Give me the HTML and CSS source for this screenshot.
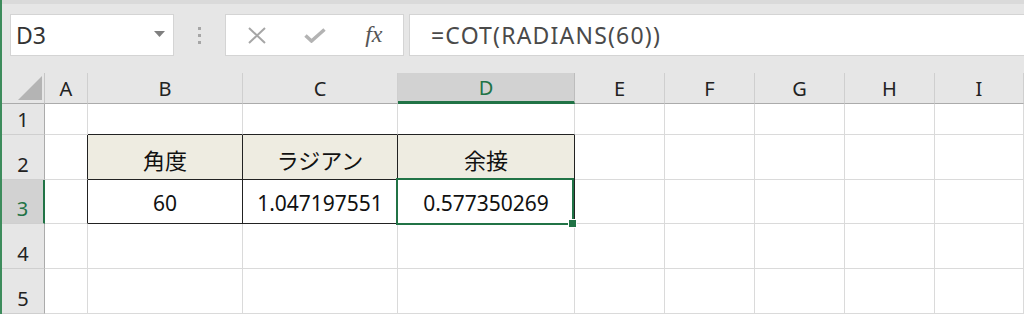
FILE: index.html
```html
<!DOCTYPE html>
<html lang="ja">
<head>
  <meta charset="UTF-8" />
  <meta name="viewport" content="width=device-width, initial-scale=1.0"/>
  <title>COT - Excel</title>
  <link rel="stylesheet" href="styles.css">
</head>
<body>
  <div class="app">
    <!-- Formula bar -->
    <div class="toolbar">
      <div class="namebox">
        <span>D3</span>
        <svg class="caret" width="11" height="6" viewBox="0 0 11 6"><polygon points="0,0 11,0 5.5,6" /></svg>
      </div>
      <div class="grip"><i></i><i></i><i></i></div>
      <div class="fxbtns">
        <svg width="18" height="17" viewBox="0 0 18 17"><path d="M1 1 L17 16 M17 1 L1 16" /></svg>
        <svg class="check" width="22" height="15" viewBox="0 0 22 15"><path d="M1.5 7.5 L7.5 13 L20.5 1.5" /></svg>
        <span class="fx">fx</span>
      </div>
      <div class="formula">=COT(RADIANS(60))</div>
    </div>

    <!-- Sheet -->
    <div class="sheet">
      <div class="corner"><svg width="24" height="24" viewBox="0 0 24 24"><polygon points="24,0 24,24 0,24" /></svg></div>
      <div class="colhead">A</div>
      <div class="colhead">B</div>
      <div class="colhead">C</div>
      <div class="colhead active">D</div>
      <div class="colhead">E</div>
      <div class="colhead">F</div>
      <div class="colhead">G</div>
      <div class="colhead">H</div>
      <div class="colhead">I</div>

      <div class="rowhead">1</div>
      <div class="cell"></div>
      <div class="cell edge-b"></div>
      <div class="cell edge-b"></div>
      <div class="cell edge-b"></div>
      <div class="cell"></div>
      <div class="cell"></div>
      <div class="cell"></div>
      <div class="cell"></div>
      <div class="cell"></div>

      <div class="rowhead">2</div>
      <div class="cell edge-r"></div>
      <div class="cell tbl head"><span>角度</span></div>
      <div class="cell tbl head"><span>ラジアン</span></div>
      <div class="cell tbl head"><span>余接</span></div>
      <div class="cell"></div>
      <div class="cell"></div>
      <div class="cell"></div>
      <div class="cell"></div>
      <div class="cell"></div>

      <div class="rowhead active">3</div>
      <div class="cell edge-r"></div>
      <div class="cell tbl">60</div>
      <div class="cell tbl">1.047197551</div>
      <div class="cell tbl selected">0.577350269</div>
      <div class="cell"></div>
      <div class="cell"></div>
      <div class="cell"></div>
      <div class="cell"></div>
      <div class="cell"></div>

      <div class="rowhead">4</div>
      <div class="cell"></div>
      <div class="cell"></div>
      <div class="cell"></div>
      <div class="cell"></div>
      <div class="cell"></div>
      <div class="cell"></div>
      <div class="cell"></div>
      <div class="cell"></div>
      <div class="cell"></div>

      <div class="rowhead">5</div>
      <div class="cell"></div>
      <div class="cell"></div>
      <div class="cell"></div>
      <div class="cell"></div>
      <div class="cell"></div>
      <div class="cell"></div>
      <div class="cell"></div>
      <div class="cell"></div>
      <div class="cell"></div>
    </div>
  </div>
</body>
</html>
```

FILE: styles.css
```css
html, body { margin: 0; padding: 0; background: #fff; overflow: hidden; }
body { font-family: "Noto Sans", "Noto Sans CJK JP", sans-serif; color: #222; }
.app { border-left: 2px solid #3d8c5c; width: 1022px; height: 314px; overflow: hidden; }

/* formula bar */
.toolbar { display: flex; align-items: stretch; height: 42px; padding: 10px 0 17px 8px; background: #e6e6e6; border-top: 4px solid #dadada; }
.namebox { width: 164px; background: #fff; border: 1px solid #d4d4d4; display: flex; align-items: center; justify-content: space-between; padding: 0 8px 0 5px; box-sizing: border-box; font-size: 23px; color: #333; }
.namebox span { line-height: 1; }
.caret { fill: #7f7f7f; margin-top: -3px; }
.grip { width: 51px; display: flex; flex-direction: column; align-items: center; justify-content: center; gap: 4px; }
.grip i { display: block; width: 3px; height: 3px; background: #a6a6a6; }
.fxbtns { width: 179px; background: #fff; border: 1px solid #d4d4d4; box-sizing: border-box; display: grid; grid-template-columns: repeat(3, 1fr); align-items: center; justify-items: center; padding-left: 2px; }
.fxbtns path { fill: none; stroke: #a6a6a6; stroke-width: 2; }
.fxbtns .check path { stroke: #b3b3b3; stroke-width: 3.5; }
.fx { font-family: "Liberation Serif", serif; font-style: italic; font-size: 24px; color: #555; margin-top: -2px; }
.formula { flex: 1; margin-left: 5px; background: #fff; border: 1px solid #d4d4d4; border-right: none; display: flex; align-items: center; padding-left: 21px; font-size: 23px; letter-spacing: 1.2px; color: #4a4a4a; }

/* sheet grid */
.sheet { display: grid; grid-template-columns: 43px 43px 155px 155px 177px 90px 90px 90px 90px 89px; grid-template-rows: 31px 31px 45px 44px 45px 45px; }
.corner { background: #e6e6e6; border-right: 1px solid #c6c6c6; border-bottom: 1px solid #ababab; display: flex; align-items: flex-end; justify-content: flex-end; padding: 0 2px 3px 0; }
.corner polygon { fill: #b4b4b4; }
.colhead { background: #e6e6e6; border-right: 1px solid #cfcfcf; border-bottom: 1px solid #ababab; display: flex; align-items: center; justify-content: center; font-size: 20px; line-height: 1; padding-top: 2px; }
.colhead.active { background: #d2d2d2; color: #217346; border-bottom: 3px solid #217346; border-right-color: #bdbdbd; }
.rowhead { background: #e6e6e6; border-right: 1px solid #ababab; border-bottom: 1px solid #cfcfcf; display: flex; align-items: flex-end; justify-content: center; font-size: 20px; line-height: 1; padding-bottom: 4px; }
.rowhead.active { background: #d2d2d2; color: #217346; border-right: 2px solid #217346; }

.cell { border-right: 1px solid #dadada; border-bottom: 1px solid #dadada; display: flex; align-items: flex-end; justify-content: center; font-size: 21px; line-height: 1; padding-bottom: 9px; color: #111; }
.cell.edge-b { border-bottom-color: #222; }
.cell.edge-r { border-right-color: #222; }
.cell.tbl { border-right-color: #222; border-bottom-color: #222; }
.cell.head { background: #eeece1; padding-bottom: 8px; }
.cell.head span { font-size: 22px; }
.cell.selected { position: relative; }
.cell.selected::after { content: ""; position: absolute; top: -2px; left: -2px; right: 0; bottom: -2px; border: 2px solid #217346; }
.cell.selected::before { content: ""; position: absolute; right: -3px; bottom: -5px; width: 7px; height: 7px; background: #217346; border: 1px solid #fff; z-index: 1; }
```
